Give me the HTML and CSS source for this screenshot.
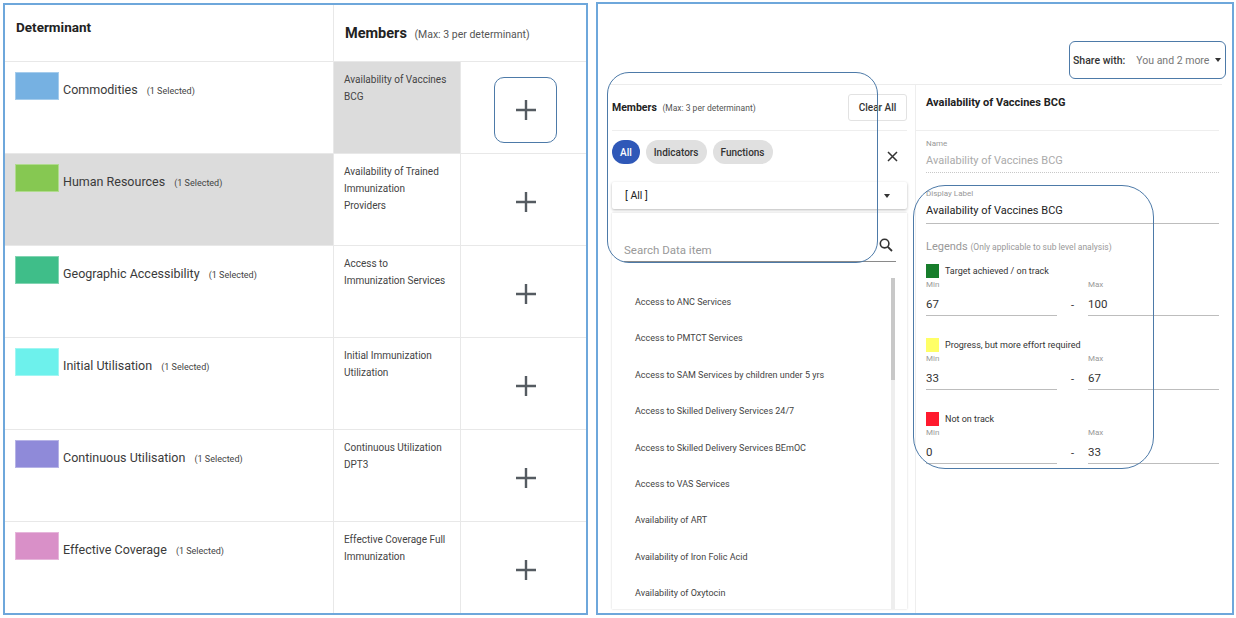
FILE: index.html
```html
<!DOCTYPE html>
<html lang="en">
<head>
    <meta charset="UTF-8">
    <meta name="viewport" content="width=device-width, initial-scale=1.0">
    <title>Determinants</title>
    <link rel="stylesheet" href="styles.css">
</head>
<body>
<div class="shot">
    <section class="det-panel">
        <div class="det-grid">
            <div class="hd hd-det">Determinant</div>
            <div class="hd hd-mem">Members <small>(Max: 3 per determinant)</small></div>

            <div class="c det"><span class="sw sw-blue"></span><span class="det-name">Commodities <small>(1 Selected)</small></span></div>
            <div class="c mem grey">Availability of Vaccines<br>BCG</div>
            <div class="c add-cell"><div class="add hl"><svg width="22" height="22" viewBox="0 0 22 22"><path d="M11 1v20M1 11h20" stroke="#555b61" stroke-width="2.4" fill="none"/></svg></div></div>

            <div class="c det grey"><span class="sw sw-green"></span><span class="det-name">Human Resources <small>(1 Selected)</small></span></div>
            <div class="c mem">Availability of Trained<br>Immunization<br>Providers</div>
            <div class="c add-cell"><div class="add"><svg width="22" height="22" viewBox="0 0 22 22"><path d="M11 1v20M1 11h20" stroke="#555b61" stroke-width="2.4" fill="none"/></svg></div></div>

            <div class="c det"><span class="sw sw-teal"></span><span class="det-name">Geographic Accessibility <small>(1 Selected)</small></span></div>
            <div class="c mem">Access to<br>Immunization Services</div>
            <div class="c add-cell"><div class="add"><svg width="22" height="22" viewBox="0 0 22 22"><path d="M11 1v20M1 11h20" stroke="#555b61" stroke-width="2.4" fill="none"/></svg></div></div>

            <div class="c det"><span class="sw sw-cyan"></span><span class="det-name">Initial Utilisation <small>(1 Selected)</small></span></div>
            <div class="c mem">Initial Immunization<br>Utilization</div>
            <div class="c add-cell"><div class="add"><svg width="22" height="22" viewBox="0 0 22 22"><path d="M11 1v20M1 11h20" stroke="#555b61" stroke-width="2.4" fill="none"/></svg></div></div>

            <div class="c det"><span class="sw sw-purple"></span><span class="det-name">Continuous Utilisation <small>(1 Selected)</small></span></div>
            <div class="c mem">Continuous Utilization<br>DPT3</div>
            <div class="c add-cell"><div class="add"><svg width="22" height="22" viewBox="0 0 22 22"><path d="M11 1v20M1 11h20" stroke="#555b61" stroke-width="2.4" fill="none"/></svg></div></div>

            <div class="c det last"><span class="sw sw-pink"></span><span class="det-name">Effective Coverage <small>(1 Selected)</small></span></div>
            <div class="c mem last">Effective Coverage Full<br>Immunization</div>
            <div class="c add-cell last"><div class="add"><svg width="22" height="22" viewBox="0 0 22 22"><path d="M11 1v20M1 11h20" stroke="#555b61" stroke-width="2.4" fill="none"/></svg></div></div>
        </div>
    </section>

    <section class="cfg-panel">
        <div class="share-bar">
            <div class="share">
                <span class="share-lbl">Share with:</span>
                <span class="share-val">You and 2 more</span>
                <span class="caret"></span>
            </div>
        </div>

        <div class="cfg-body">
            <div class="members">
                <div class="members-hd">
                    <div class="members-title">Members <small>(Max: 3 per determinant)</small></div>
                    <button class="btn-clear">Clear All</button>
                </div>
                <div class="chips">
                    <span class="chip active">All</span>
                    <span class="chip">Indicators</span>
                    <span class="chip">Functions</span>
                    <svg class="close" width="11" height="11" viewBox="0 0 11 11"><path d="M1 1l9 9M10 1l-9 9" stroke="#333" stroke-width="1.5"/></svg>
                </div>
                <div class="select">[ All ]<span class="caret"></span></div>
                <div class="card">
                    <div class="search">
                        <span class="search-ph">Search Data item</span>
                        <svg width="14" height="14" viewBox="0 0 14 14"><circle cx="5.6" cy="5.6" r="4.3" stroke="#333" stroke-width="1.6" fill="none"/><path d="M8.8 8.8l4.2 4.2" stroke="#333" stroke-width="1.8"/></svg>
                    </div>
                    <div class="list">
                        <ul class="items">
                            <li>Access to ANC Services</li>
                            <li>Access to PMTCT Services</li>
                            <li>Access to SAM Services by children under 5 yrs</li>
                            <li>Access to Skilled Delivery Services 24/7</li>
                            <li>Access to Skilled Delivery Services BEmOC</li>
                            <li>Access to VAS Services</li>
                            <li>Availability of ART</li>
                            <li>Availability of Iron Folic Acid</li>
                            <li>Availability of Oxytocin</li>
                        </ul>
                        <div class="scroll"><div class="thumb"></div></div>
                    </div>
                </div>
            </div>

            <div class="detail">
                <div class="detail-hd">Availability of Vaccines BCG</div>
                <div class="f-label f-first">Name</div>
                <div class="f-val muted dotted">Availability of Vaccines BCG</div>
                <div class="f-label f-next">Display Label</div>
                <div class="f-val solid">Availability of Vaccines BCG</div>
                <div class="legends">Legends <small>(Only applicable to sub level analysis)</small></div>

                <div class="lg">
                    <div class="lg-title"><span class="lsw lsw-green"></span>Target achieved / on track</div>
                    <div class="mm">
                        <div class="mm-f"><div class="f-label">Min</div><div class="mm-val">67</div></div>
                        <div class="mm-dash">-</div>
                        <div class="mm-f"><div class="f-label">Max</div><div class="mm-val">100</div></div>
                    </div>
                </div>
                <div class="lg">
                    <div class="lg-title"><span class="lsw lsw-yellow"></span>Progress, but more effort required</div>
                    <div class="mm">
                        <div class="mm-f"><div class="f-label">Min</div><div class="mm-val">33</div></div>
                        <div class="mm-dash">-</div>
                        <div class="mm-f"><div class="f-label">Max</div><div class="mm-val">67</div></div>
                    </div>
                </div>
                <div class="lg">
                    <div class="lg-title"><span class="lsw lsw-red"></span>Not on track</div>
                    <div class="mm">
                        <div class="mm-f"><div class="f-label">Min</div><div class="mm-val">0</div></div>
                        <div class="mm-dash">-</div>
                        <div class="mm-f"><div class="f-label">Max</div><div class="mm-val">33</div></div>
                    </div>
                </div>
            </div>
        </div>

        <!-- callout outlines drawn over the screenshot -->
        <div class="callout callout-members"></div>
        <div class="callout callout-detail"></div>
    </section>
</div>
</body>
</html>
```

FILE: styles.css
```css
body { margin: 0; background: #fff; color: #333; font-family: Roboto, "Liberation Sans", sans-serif; }
.shot { display: flex; align-items: flex-start; gap: 8px; padding: 2px 0 0 3px; width: 1236px; height: 618px; box-sizing: border-box; overflow: hidden; }

/* left: determinant table */
.det-panel { width: 585px; height: 612px; margin-top: 1px; border: 2px solid #6ea7db; box-sizing: border-box; overflow: hidden; }
.det-grid { display: grid; grid-template-columns: 329px 127px 1fr; grid-template-rows: 57px repeat(5, 92px) 1fr; height: 100%; }
.hd { border-bottom: 1px solid #e8e8e8; box-sizing: border-box; }
.hd-det { padding: 14px 0 0 11px; font-size: 13.5px; line-height: 16px; font-weight: 700; color: #222; border-right: 1px solid #e8e8e8; }
.hd-mem { grid-column: 2 / 4; padding: 20px 0 0 11px; font-size: 14.5px; line-height: 18px; font-weight: 700; color: #222; }
.hd-mem small { font-size: 10.5px; font-weight: 400; color: #555; margin-left: 4px; }
.c { border-bottom: 1px solid #e8e8e8; box-sizing: border-box; }
.c.last { border-bottom: none; }
.grey { background: #dcdcdc; }
.det { display: flex; align-items: flex-start; padding: 10px 0 0 10px; border-right: 1px solid #e8e8e8; }
.sw { width: 44px; height: 28px; flex: none; box-sizing: border-box; border: 1px solid rgba(255,255,255,0.35); }
.sw-blue { background: #76b1e2; }
.sw-green { background: #86c852; }
.sw-teal { background: #3fbe89; }
.sw-cyan { background: #6df1ec; }
.sw-purple { background: #8f8ad9; }
.sw-pink { background: #d990c8; }
.det-name { margin: 10px 0 0 4px; font-size: 12.5px; line-height: 16px; color: #3a3a3a; }
.det-name small { font-size: 9px; color: #444; margin-left: 6px; }
.mem { padding: 9px 4px 0 10px; font-size: 10px; line-height: 17px; color: #444; border-right: 1px solid #e8e8e8; white-space: nowrap; }
.add-cell { display: flex; align-items: center; justify-content: center; padding: 4px 0 0 4px; }
.add { width: 63px; height: 66px; box-sizing: border-box; border: 1.5px solid transparent; border-radius: 10px; display: flex; align-items: center; justify-content: center; }
.add.hl { border-color: #4d7aa8; }

/* right: configuration */
.cfg-panel { position: relative; width: 638px; height: 613px; border: 2px solid #6ea7db; box-sizing: border-box; display: flex; flex-direction: column; overflow: hidden; }
.share-bar { height: 80px; flex: none; display: flex; justify-content: flex-end; align-items: flex-end; padding: 0 6px 5px 0; box-sizing: border-box; }
.share { height: 38px; width: 157px; box-sizing: border-box; border: 1.5px solid #4d7aa8; border-radius: 6px; display: flex; align-items: center; padding: 0 3px 0 3px; font-size: 10.5px; }
.share-lbl { font-weight: 500; color: #333; }
.share-val { color: #777; margin-left: 11px; }
.caret { width: 0; height: 0; border-left: 3.5px solid transparent; border-right: 3.5px solid transparent; border-top: 4px solid #333; margin-left: 6px; }

.cfg-body { flex: 1; min-height: 0; margin: 0 10px 0 12px; border-top: 1px solid #ececec; display: flex; }
.members { width: 305px; flex: none; padding: 0 8px 4px 2px; box-sizing: border-box; display: flex; flex-direction: column; }
.members-hd { height: 46px; flex: none; box-sizing: border-box; border-bottom: 1px solid #eee; display: flex; align-items: center; justify-content: space-between; }
.members-title { font-size: 10.5px; font-weight: 700; color: #222; }
.members-title small { font-size: 8.5px; font-weight: 400; color: #555; margin-left: 3px; }
.btn-clear { height: 27px; width: 59px; padding: 0; background: #fff; border: 1px solid #e2e2e2; border-radius: 3px; font-family: inherit; font-size: 10px; font-weight: 500; color: #333; }
.chips { display: flex; align-items: center; gap: 6px; margin-top: 9px; }
.chip { height: 24px; padding: 0 8px; border-radius: 12px; background: #e0e0e0; font-size: 10px; font-weight: 500; color: #333; display: flex; align-items: center; }
.chip.active { background: #2f58b8; color: #fff; padding: 0 8px; }
.close { margin: 8px 9px 0 auto; }
.select { margin-top: 18px; height: 27px; flex: none; display: flex; align-items: center; justify-content: space-between; padding: 0 17px 0 13px; background: #fff; box-shadow: 0 1px 3px rgba(0,0,0,0.28); border-radius: 2px; font-size: 10.5px; color: #222; }
.card { margin-top: 4px; flex: 1; min-height: 0; box-shadow: 0 0 2px rgba(0,0,0,0.18); display: flex; flex-direction: column; }
.search { margin: 25px 11px 0 12px; display: flex; align-items: flex-end; justify-content: space-between; padding-bottom: 3px; border-bottom: 1px solid #8a8a8a; }
.search-ph { font-size: 11.5px; line-height: 16px; color: #999; }
.search svg { margin: 0 3px 6px 0; }
.list { flex: 1; min-height: 0; display: flex; margin: 16px 12px 0 0; overflow: hidden; }
.items { flex: 1; list-style: none; margin: 0; padding: 6px 0 0 23px; }
.items li { height: 36.4px; line-height: 36.4px; font-size: 9px; color: #444; white-space: nowrap; }
.scroll { width: 4px; background: #eeeeee; }
.thumb { height: 102px; background: #c8c8c8; }

.detail { flex: 1; border-left: 1px solid #eee; padding: 0 3px 0 0; display: flex; flex-direction: column; }
.detail-hd { height: 46px; flex: none; box-sizing: border-box; border-bottom: 1px solid #eee; padding: 11px 0 0 10px; font-size: 11px; line-height: 14px; font-weight: 700; color: #222; }
.f-label { font-size: 8px; line-height: 12px; color: #999; }
.detail > .f-label, .detail > .f-val, .legends, .lg { margin-left: 10px; }
.f-first { margin-top: 7px; }
.f-next { margin-top: 15px; }
.f-val { margin-top: 3px; font-size: 11px; line-height: 16px; color: #222; padding-bottom: 3px; }
.f-val.muted { color: #aaa; }
.f-val.dotted { border-bottom: 1px dotted #c8c8c8; }
.f-val.solid { padding-bottom: 4px; border-bottom: 1px solid #bdbdbd; }
.legends { margin-top: 15px; font-size: 11px; line-height: 16px; color: #999; }
.legends small { font-size: 8.5px; color: #999; }
.lg { margin-top: 9px; }
.lg + .lg { margin-top: 22px; }
.lg-title { height: 14px; display: flex; align-items: center; gap: 6px; font-size: 9px; color: #333; }
.lsw { width: 13px; height: 14px; flex: none; }
.lsw-green { background: #177d2b; }
.lsw-yellow { background: #ffff66; }
.lsw-red { background: #ff1a2e; }
.mm { display: flex; margin-top: 1px; }
.mm-f { width: 131px; }
.mm-dash { width: 31px; text-align: center; padding-top: 19px; font-size: 11px; line-height: 16px; color: #333; }
.mm-val { margin-top: 5px; font-size: 11.5px; line-height: 16px; color: #333; padding-bottom: 3px; border-bottom: 1px solid #bdbdbd; }

.callout { position: absolute; border: 1.5px solid #4d7aa8; box-sizing: border-box; pointer-events: none; }
.callout-members { left: 9px; top: 68px; width: 271px; height: 191px; border-radius: 22px; }
.callout-detail { left: 315px; top: 181px; width: 241px; height: 284px; border-radius: 32px; }
```
